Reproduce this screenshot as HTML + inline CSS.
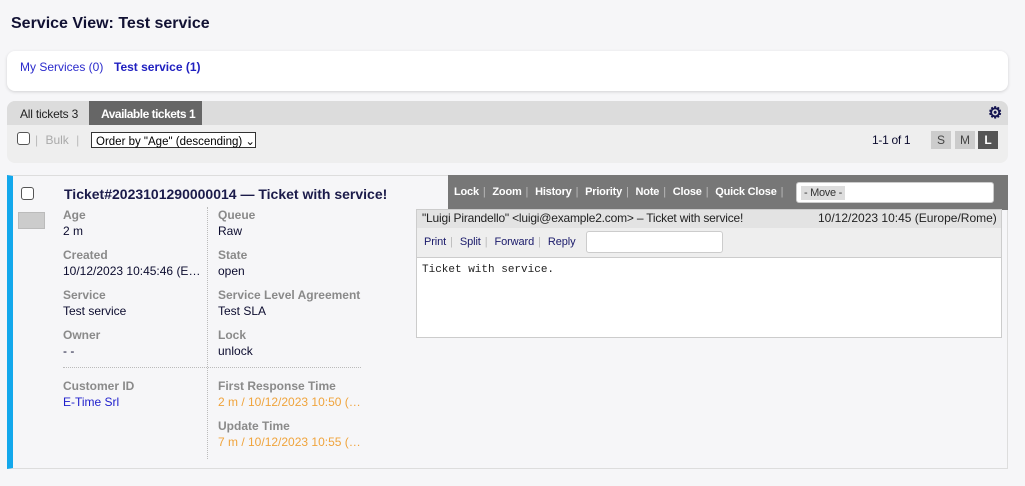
<!DOCTYPE html>
<html><head><style>
*{margin:0;padding:0;box-sizing:border-box}
body{width:1025px;height:486px;background:#f6f6f8;font-family:"Liberation Sans",Arial,sans-serif;font-size:12px;color:#0b0b2e;position:relative;overflow:hidden}
.a{position:absolute;white-space:nowrap}
.lb{color:#8a8a8a;font-weight:bold}
.sep{color:#bbb;margin:0 4px;font-weight:normal}
.cb{width:13px;height:13px;border:1px solid #555;border-radius:3px;background:#fff}
</style></head><body>
<div class="a" style="left:11px;top:15px;font-size:16px;font-weight:bold;color:#111133">Service View: Test service</div>
<div class="a" style="left:7px;top:51px;width:1001px;height:40px;background:#fff;border-radius:8px;box-shadow:0 1px 3px rgba(0,0,0,.15)"></div>
<div class="a" style="left:20px;top:60px;color:#2b2bcc">My Services (0)</div>
<div class="a" style="left:114px;top:60px;color:#2020c0;font-weight:bold">Test service (1)</div>

<div class="a" style="left:7px;top:101px;width:1001px;height:62px;background:#eeeeee;border-radius:8px;overflow:hidden">
 <div style="height:24px;background:#dcdcdc"></div>
</div>
<div class="a" style="left:20px;top:107px;color:#222;letter-spacing:-0.2px">All tickets 3</div>
<div class="a" style="left:89px;top:101px;width:113px;height:24px;background:#666;color:#fff;font-weight:bold;padding:6px 0 0 12px;letter-spacing:-0.5px">Available tickets 1</div>
<div class="a" style="left:988px;top:103px;font-size:16px;color:#141450;font-weight:bold">⚙</div>
<div class="a cb" style="left:17px;top:132px"></div>
<div class="a" style="left:35px;top:133px;color:#aaa"><span class="sep" style="margin-left:0">|</span> Bulk <span class="sep">|</span></div>
<div class="a" style="left:91px;top:132px;width:165px;height:16px;border:1px solid #333;background:#fff;padding:1px 4px;font-size:11.5px;color:#000">Order by "Age" (descending) ⌄</div>
<div class="a" style="left:872px;top:133px;letter-spacing:-0.3px">1-1 of 1</div>
<div class="a" style="left:931px;top:131px;width:20px;height:18px;background:#ccc;text-align:center;padding-top:2px;color:#444">S</div>
<div class="a" style="left:955px;top:131px;width:20px;height:18px;background:#ccc;text-align:center;padding-top:2px;color:#444">M</div>
<div class="a" style="left:978px;top:131px;width:20px;height:18px;background:#555;text-align:center;padding-top:2px;color:#fff;font-weight:bold">L</div>

<div class="a" style="left:7px;top:175px;width:1001px;height:294px;border:1px solid #ddd;border-left:6px solid #13a8ec;background:#f6f6f8"></div>
<div class="a cb" style="left:21px;top:187px"></div>
<div class="a" style="left:18px;top:212px;width:27px;height:17px;background:#ccc;border:1px solid #bbb"></div>
<div class="a" style="left:64px;top:186px;font-size:14px;font-weight:bold;color:#1b1b4a">Ticket#2023101290000014 — Ticket with service!</div>
<div class="a" style="left:207px;top:207px;height:252px;border-left:1px dotted #bbb"></div>
<div class="a" style="left:63px;top:367px;width:298px;border-top:1px dotted #bbb"></div>

<div class="a lb" style="left:63px;top:208px">Age</div><div class="a" style="left:63px;top:224px">2 m</div>
<div class="a lb" style="left:63px;top:248px">Created</div><div class="a" style="left:63px;top:264px">10/12/2023 10:45:46 (E…</div>
<div class="a lb" style="left:63px;top:288px">Service</div><div class="a" style="left:63px;top:304px">Test service</div>
<div class="a lb" style="left:63px;top:328px">Owner</div><div class="a" style="left:63px;top:344px">- -</div>
<div class="a lb" style="left:63px;top:379px">Customer ID</div><div class="a" style="left:63px;top:395px;color:#2020cc">E-Time Srl</div>

<div class="a lb" style="left:218px;top:208px">Queue</div><div class="a" style="left:218px;top:224px">Raw</div>
<div class="a lb" style="left:218px;top:248px">State</div><div class="a" style="left:218px;top:264px">open</div>
<div class="a lb" style="left:218px;top:288px">Service Level Agreement</div><div class="a" style="left:218px;top:304px">Test SLA</div>
<div class="a lb" style="left:218px;top:328px">Lock</div><div class="a" style="left:218px;top:344px">unlock</div>
<div class="a lb" style="left:218px;top:379px">First Response Time</div><div class="a" style="left:218px;top:395px;color:#f0a43c">2 m / 10/12/2023 10:50 (…</div>
<div class="a lb" style="left:218px;top:419px">Update Time</div><div class="a" style="left:218px;top:435px;color:#f0a43c">7 m / 10/12/2023 10:55 (…</div>

<div class="a" style="left:448px;top:175px;width:560px;height:35px;background:#777"></div>
<div class="a" style="left:454px;top:186px;color:#fff;font-weight:bold;font-size:11px;letter-spacing:-0.2px">Lock<span class="sep">|</span> Zoom<span class="sep">|</span> History<span class="sep">|</span> Priority<span class="sep">|</span> Note<span class="sep">|</span> Close<span class="sep">|</span> Quick Close<span class="sep">|</span></div>
<div class="a" style="left:796px;top:182px;width:198px;height:21px;background:#fff;border:1px solid #ccc;border-radius:3px"><span style="display:inline-block;margin:3px 0 0 4px;background:#ddd;padding:1px 3px;color:#333;font-size:11px;letter-spacing:-0.3px">- Move -</span></div>
<div class="a" style="left:416px;top:209px;width:586px;height:129px;border:1px solid #ccc;background:#fff"></div>
<div class="a" style="left:417px;top:210px;width:584px;height:18px;background:#e3e3e3"></div>
<div class="a" style="left:422px;top:211px;color:#222;letter-spacing:-0.2px">"Luigi Pirandello" &lt;luigi@example2.com&gt; – Ticket with service!</div>
<div class="a" style="left:818px;top:211px;color:#222">10/12/2023 10:45 (Europe/Rome)</div>
<div class="a" style="left:417px;top:228px;width:584px;height:30px;background:#eee;border-bottom:1px solid #ccc"></div>
<div class="a" style="left:424px;top:236px;color:#1a1a6a;font-size:11px;letter-spacing:-0.1px">Print<span class="sep">|</span> Split<span class="sep">|</span> Forward<span class="sep">|</span> Reply</div>
<div class="a" style="left:586px;top:231px;width:137px;height:22px;background:#fff;border:1px solid #ccc;border-radius:3px"></div>
<div class="a" style="left:422px;top:264px;font-family:'Liberation Mono',monospace;font-size:11px;color:#222">Ticket with service.</div>
</body></html>
